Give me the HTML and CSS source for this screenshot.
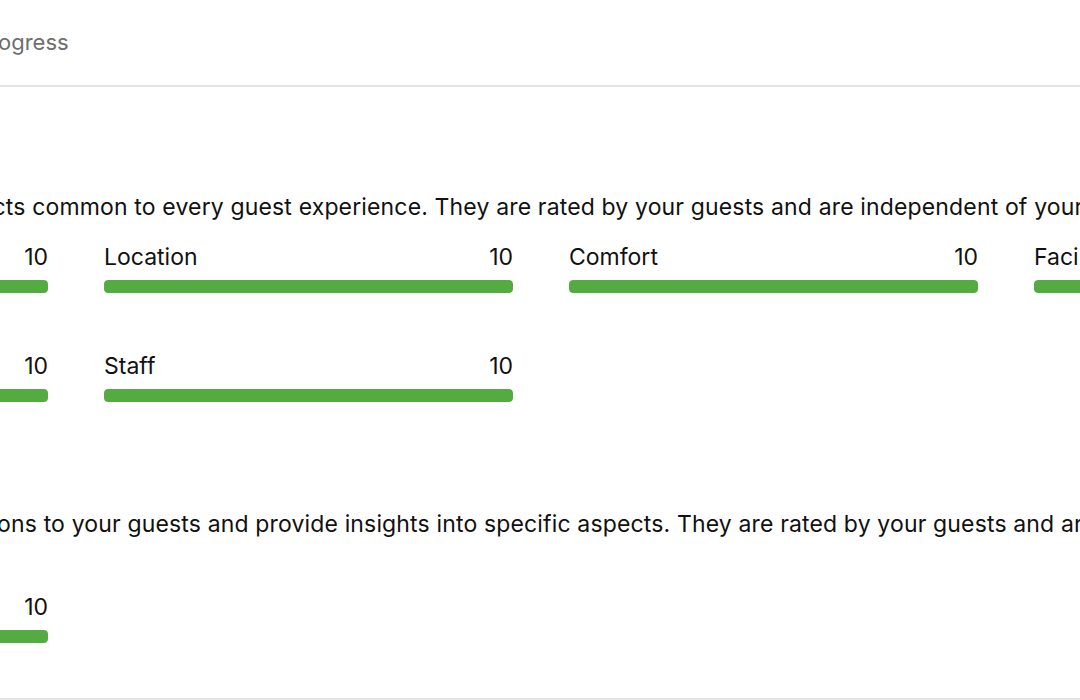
FILE: index.html
```html
<!DOCTYPE html>
<html lang="en">
<head>
<meta charset="utf-8">
<title>Progress</title>
<link rel="stylesheet" href="styles.css">
</head>
<body>
<div class="viewport">
  <div class="page">
    <header class="tabs">
      <span class="tab">Progress</span>
    </header>

    <section class="section">
      <h2 class="title">Categories</h2>
      <p class="desc">The key categories are the aspects common to every guest experience. They are rated by your guests and are independent of your property type.</p>
      <div class="grid">
        <div class="item">
          <div class="item-head"><span class="label">Cleanliness</span><span class="score">10</span></div>
          <div class="bar"><div class="fill" style="width:100%"></div></div>
        </div>
        <div class="item">
          <div class="item-head"><span class="label">Location</span><span class="score">10</span></div>
          <div class="bar"><div class="fill" style="width:100%"></div></div>
        </div>
        <div class="item">
          <div class="item-head"><span class="label">Comfort</span><span class="score">10</span></div>
          <div class="bar"><div class="fill" style="width:100%"></div></div>
        </div>
        <div class="item">
          <div class="item-head"><span class="label">Facilities</span><span class="score">10</span></div>
          <div class="bar"><div class="fill" style="width:100%"></div></div>
        </div>
        <div class="item">
          <div class="item-head"><span class="label">Value for money</span><span class="score">10</span></div>
          <div class="bar"><div class="fill" style="width:100%"></div></div>
        </div>
        <div class="item">
          <div class="item-head"><span class="label">Staff</span><span class="score">10</span></div>
          <div class="bar"><div class="fill" style="width:100%"></div></div>
        </div>
      </div>
    </section>

    <section class="section last">
      <h2 class="title">Subcategories</h2>
      <p class="desc">Subcategories ask typical questions to your guests and provide insights into specific aspects. They are rated by your guests and are not included in your overall score.</p>
      <div class="grid">
        <div class="item">
          <div class="item-head"><span class="label">Free WiFi</span><span class="score">10</span></div>
          <div class="bar"><div class="fill" style="width:100%"></div></div>
        </div>
      </div>
    </section>
  </div>
</div>
</body>
</html>
```
FILE: styles.css
```css
* { box-sizing: border-box; }

html, body {
  margin: 0;
  padding: 0;
  background: #ffffff;
}

body {
  font-family: "Inter", "Noto Sans", sans-serif;
  color: #111111;
  overflow: hidden;
}

.viewport {
  width: 1080px;
  height: 700px;
  overflow: hidden;
}

.page {
  margin-left: -361px;
  width: 1804px;
}

.tabs {
  height: 87px;
  border-bottom: 2px solid #e4e4e4;
  padding-top: 27px;
  padding-left: 337px;
  margin-right: -400px;
}

.tab {
  font-size: 22px;
  line-height: 30px;
  color: #6e6e6e;
}

.section {
  padding-top: 39px;
}

.section.last {
  padding-top: 41px;
  padding-bottom: 55px;
  border-bottom: 2px solid #e4e4e4;
  margin-right: -400px;
  padding-right: 400px;
}

.title {
  margin: 0 0 31px;
  font-size: 26px;
  line-height: 34px;
  font-weight: 700;
}

.desc {
  margin: 0;
  font-size: 23px;
  line-height: 33px;
  letter-spacing: 0.15px;
}

.grid {
  margin-top: 18px;
  display: grid;
  grid-template-columns: repeat(4, 409px);
  column-gap: 56px;
  row-gap: 58px;
}

.item-head {
  display: flex;
  justify-content: space-between;
  font-size: 23px;
  line-height: 30px;
}

.bar {
  margin-top: 8px;
  height: 13px;
  border-radius: 4px;
  background: #e6e6e6;
  overflow: hidden;
}

.fill {
  height: 100%;
  background: #54ab41;
  border-radius: 4px;
}
```
